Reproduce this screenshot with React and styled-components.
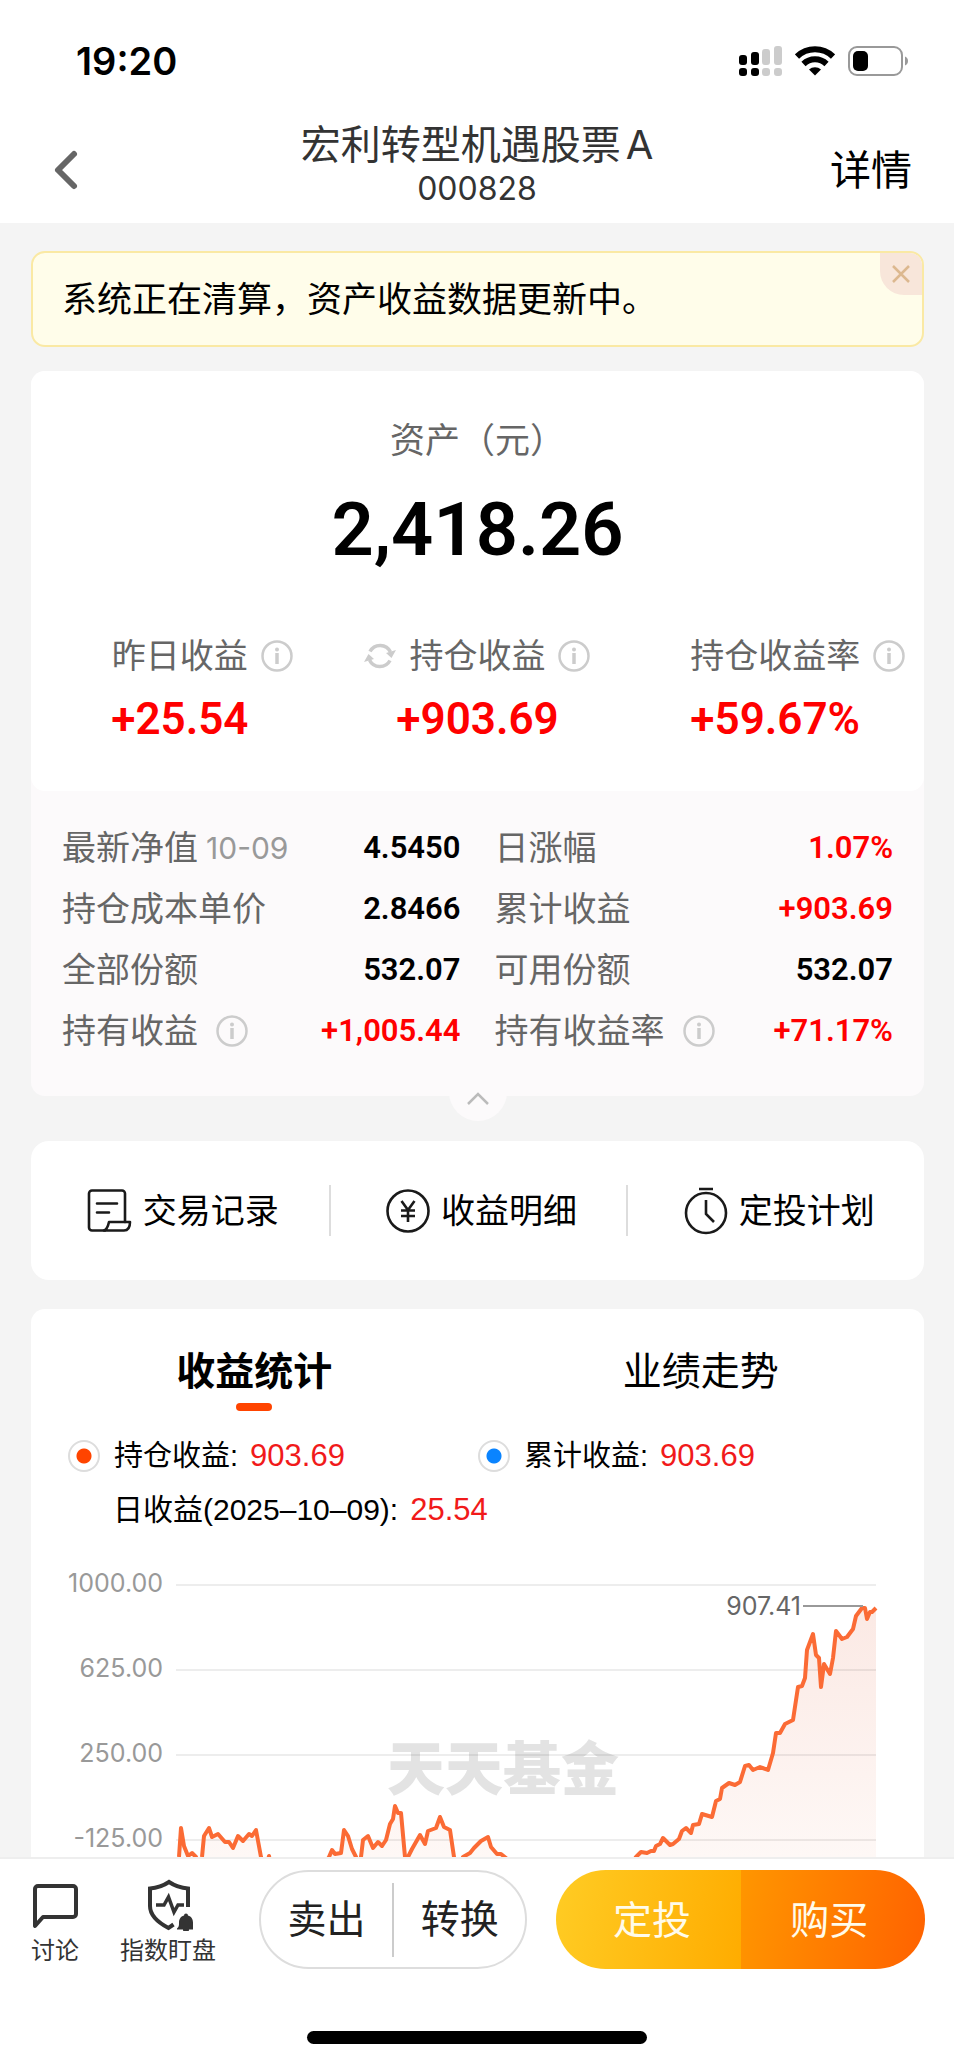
import { useState } from "react";
import styled, { createGlobalStyle } from "styled-components";

const GlobalStyle = createGlobalStyle`
  * {
    box-sizing: border-box;
  }

  body {
    margin: 0;
    background: #f4f4f4;
    color: #000;
    font-family: Inter, "Noto Sans CJK SC", sans-serif;
  }

  button {
    margin: 0;
    padding: 0;
    border: 0;
    background: none;
    color: inherit;
    font: inherit;
    cursor: pointer;
  }

  svg {
    display: block;
    flex: none;
  }
`;

const Page = styled.div`
  display: flex;
  flex-direction: column;
  height: 100vh;
`;

const Top = styled.header`
  flex: none;
  background: #fff;
`;

const StatusBar = styled.div`
  display: flex;
  align-items: center;
  justify-content: space-between;
  padding: 36px 44px 0 76px;
`;

const Clock = styled.span`
  font-size: 38px;
  line-height: 50px;
  font-weight: 600;
`;

const StatusIcons = styled.div`
  display: flex;
  align-items: center;
  gap: 13px;
`;

const NavBar = styled.nav`
  display: grid;
  grid-template-columns: 1fr auto 1fr;
  align-items: center;
  padding: 33px 42px 16px;
`;

const BackButton = styled.button`
  justify-self: start;
  padding: 14px 0 0 10px;
`;

const Heading = styled.div`
  display: flex;
  flex-direction: column;
  align-items: center;
  color: #333;
`;

const FundName = styled.h1`
  display: flex;
  gap: 5px;
  margin: 0;
  font-size: 40px;
  line-height: 52px;
  font-weight: 400;
`;

const FundCode = styled.span`
  font-size: 32px;
  line-height: 36px;
`;

const DetailLink = styled.a`
  justify-self: end;
  padding-top: 14px;
  color: #000;
  font-size: 41px;
  line-height: 56px;
  text-decoration: none;
`;

const Content = styled.main`
  flex: 1;
  min-height: 0;
  overflow-y: auto;
  scrollbar-width: none;
  padding: 28px 30px 0 31px;
`;

const Notice = styled.div`
  display: flex;
  align-items: flex-start;
  justify-content: space-between;
  overflow: hidden;
  border: 2px solid #fae9a4;
  border-radius: 14px;
  background: #fffdea;
`;

const NoticeText = styled.p`
  margin: 0;
  padding: 20px 29px;
  font-size: 35px;
  line-height: 52px;
`;

const NoticeClose = styled.button`
  display: grid;
  place-items: center;
  width: 42px;
  height: 42px;
  border-bottom-left-radius: 24px;
  background: #f8e6da;
`;

const Card = styled.section`
  border-radius: ${(p) => p.$radius || 14}px;
  background: #fff;
`;

const Holding = styled.section`
  display: flex;
  flex-direction: column;
  margin-top: 24px;
  border-radius: 14px;
  background: #fcfafb;
`;

const AssetCard = styled(Card)`
  padding: 43px 0 45px;
  text-align: center;
`;

const AssetLabel = styled.div`
  color: #666;
  font-size: 35px;
  line-height: 52px;
`;

const AssetValue = styled.div`
  margin-top: 16px;
  font-family: Roboto, sans-serif;
  font-size: 74px;
  line-height: 96px;
  font-weight: 600;
`;

const Summary = styled.div`
  display: grid;
  grid-template-columns: repeat(3, 1fr);
  margin-top: 52px;
`;

const SummaryLabel = styled.div`
  display: grid;
  grid-template-columns: 1fr auto 1fr;
  align-items: center;
  gap: 13px;
  color: #666;
  font-size: 34px;
  line-height: 52px;
`;

const Leading = styled.span`
  justify-self: end;
`;

const SummaryValue = styled.div`
  margin-top: 10px;
  color: #f00;
  font-family: Roboto, sans-serif;
  font-size: 44px;
  line-height: 54px;
  font-weight: 600;
`;

const InfoButton = styled.button`
  width: 32px;
  height: 32px;
`;

const Details = styled.dl`
  display: grid;
  grid-template-columns: 1fr 1fr;
  column-gap: 34px;
  row-gap: 9px;
  margin: 0;
  padding: 31px 31px 6px;
`;

const DetailItem = styled.div`
  display: flex;
  align-items: center;
  justify-content: space-between;
`;

const DetailLabel = styled.dt`
  display: flex;
  align-items: center;
  gap: ${(p) => (p.$info ? 18 : 8)}px;
  color: #666;
  font-size: 34px;
  line-height: 52px;
`;

const DetailDate = styled.span`
  color: #999;
  font-size: 30px;
`;

const DetailValue = styled.dd`
  margin: 0;
  color: ${(p) => (p.$up ? "#f00" : "#000")};
  font-family: Roboto, sans-serif;
  font-size: 31px;
  line-height: 52px;
  font-weight: 600;
`;

const Collapse = styled.button`
  display: grid;
  place-items: center;
  align-self: center;
  width: 58px;
  height: 58px;
  margin-bottom: -25px;
  padding-top: 14px;
  border-radius: 50%;
  background: #fcfafb;
`;

const Actions = styled(Card)`
  display: grid;
  grid-template-columns: repeat(3, 1fr);
  margin-top: 45px;
  padding: 44px 0;
`;

const ActionButton = styled.button`
  display: flex;
  align-items: center;
  justify-content: center;
  gap: 11px;
  height: 51px;
  padding-left: 6px;
  font-size: 34px;
  line-height: 50px;

  & + & {
    border-left: 2px solid #ddd;
  }
`;

const Stats = styled(Card)`
  margin-top: 29px;
  padding-top: 34px;
`;

const Tabs = styled.div`
  display: grid;
  grid-template-columns: 1fr 1fr;
`;

const Tab = styled.button`
  display: flex;
  flex-direction: column;
  align-items: center;
  gap: 4px;
  font-size: 39px;
  line-height: 56px;
  font-weight: ${(p) => (p.$active ? 700 : 400)};

  &::after {
    content: "";
    width: 36px;
    height: 8px;
    border-radius: 4px;
    background: ${(p) => (p.$active ? "#ff4400" : "transparent")};
  }
`;

const Legend = styled.div`
  display: grid;
  grid-template-columns: 410px 1fr;
  row-gap: 14px;
  margin-top: 25px;
  padding-left: 37px;
  font-family: "Liberation Sans", "Noto Sans CJK SC", sans-serif;
  font-size: 30px;
  line-height: 40px;
`;

const LegendItem = styled.label`
  display: flex;
  align-items: center;
  gap: 14px;
  font-size: 29px;
`;

const LegendToggle = styled.input`
  appearance: none;
  flex: none;
  width: 32px;
  height: 32px;
  margin: 0;
  border: 2px solid #ddd;
  border-radius: 50%;

  &:checked {
    background: radial-gradient(circle, ${(p) => p.$color} 7px, transparent 8px);
  }
`;

const DailyProfit = styled.div`
  grid-column: 1 / -1;
  padding-left: 45px;
`;

const Red = styled.span`
  margin-left: 12px;
  color: #f11a1a;
  font-size: 31px;
`;

const Chart = styled.svg`
  width: 100%;
  height: auto;
  margin-top: 31px;
  font-size: 25px;
`;

const Footer = styled.footer`
  flex: none;
  border-top: 2px solid #eee;
  background: #fff;
`;

const Toolbar = styled.div`
  display: flex;
  align-items: center;
  padding: 11px 29px 0 31px;
`;

const ToolButton = styled.button`
  display: flex;
  flex-direction: column;
  align-items: center;
  gap: 3px;
  margin-right: 41px;
  padding-top: 7px;
  color: #333;
  font-size: 24px;
  line-height: 34px;
`;

const OutlinePill = styled.div`
  display: flex;
  flex: 265;
  align-items: center;
  height: 99px;
  margin-left: 2px;
  border: 2px solid #ddd;
  border-radius: 50px;
  color: #222;
`;

const PillButton = styled.button`
  flex: 1;
  height: 74px;
  padding-bottom: 7px;
  font-size: 39px;

  & + & {
    border-left: 2px solid #ccc;
  }
`;

const SolidPill = styled.div`
  display: flex;
  flex: 370;
  height: 99px;
  margin-left: 29px;
  overflow: hidden;
  border-radius: 50px;
  color: #fffbea;
`;

const SolidButton = styled.button`
  flex: 1;
  padding-bottom: 6px;
  background: linear-gradient(100deg, ${(p) => p.$from}, ${(p) => p.$to});
  font-size: 39px;

  &:first-child {
    padding-left: 7px;
  }

  &:last-child {
    padding-right: 7px;
  }
`;

const HomeIndicator = styled.div`
  width: 340px;
  height: 13px;
  margin: 62px auto 20px;
  border-radius: 7px;
  background: #000;
`;

const SignalIcon = () => (
  <svg width="43" height="31" viewBox="0 0 43 31">
    <rect x="0" y="9" width="8" height="10" rx="3" />
    <rect x="12" y="6" width="8" height="13" rx="3" />
    <rect x="23" y="3" width="8" height="16" rx="3" fill="#ccc" />
    <rect x="35" y="0" width="8" height="19" rx="3" fill="#ccc" />
    <rect x="0" y="22" width="8" height="8" rx="3" />
    <rect x="12" y="22" width="8" height="8" rx="3" />
    <rect x="23" y="22" width="8" height="8" rx="3" fill="#ccc" />
    <rect x="35" y="22" width="8" height="8" rx="3" fill="#ccc" />
  </svg>
);

const WifiIcon = () => (
  <svg width="40" height="30" viewBox="0 0 40 30" fill="none" stroke="#000">
    <path d="M2 10.500a26 26 0 0 1 36 0" strokeWidth="6" />
    <path d="M8.500 18a16.500 16.500 0 0 1 23 0" strokeWidth="6" />
    <path d="M14 23.500a9 9 0 0 1 12 0L20 29.500z" fill="#000" stroke="none" />
  </svg>
);

const BatteryIcon = () => (
  <svg width="62" height="30" viewBox="0 0 62 30">
    <rect x="1" y="1" width="53" height="28" rx="8" fill="none" stroke="#999" strokeWidth="2" />
    <rect x="5" y="5" width="15" height="20" rx="5" />
    <path d="M57 10.500c4 1 4 8 0 9z" fill="#999" />
  </svg>
);

const BackIcon = () => (
  <svg width="28" height="44" viewBox="0 0 28 44" fill="none" stroke="#666" strokeWidth="6" strokeLinecap="round" strokeLinejoin="round">
    <path d="M22 6L6 22l16 16" />
  </svg>
);

const CloseIcon = () => (
  <svg width="18" height="18" viewBox="0 0 18 18" stroke="#dcb88f" strokeWidth="2.500">
    <path d="M1 1l16 16M17 1L1 17" />
  </svg>
);

const InfoIcon = () => (
  <svg width="32" height="32" viewBox="0 0 32 32">
    <circle cx="16" cy="16" r="14.500" fill="none" stroke="#ccc" strokeWidth="2.500" />
    <circle cx="16" cy="9.500" r="2" fill="#ccc" />
    <path d="M16 13v11" stroke="#ccc" strokeWidth="3.500" />
  </svg>
);

// two arcs with arrow heads on the right and the left
const RefreshIcon = () => (
  <svg width="32" height="28" viewBox="0 0 32 28" fill="none" stroke="#ccc" strokeWidth="3.500">
    <path d="M6 9.500A11.500 11.500 0 0 1 26.500 10" />
    <path d="M26 18.500A11.500 11.500 0 0 1 5.500 18" />
    <path d="M22 11l10-3-4.500 8zM10 17L0 20l4.500-8z" fill="#ccc" stroke="none" />
  </svg>
);

const ChevronUpIcon = () => (
  <svg width="24" height="14" viewBox="0 0 24 14" fill="none" stroke="#bbb" strokeWidth="2.500">
    <path d="M2 12L12 2l10 10" />
  </svg>
);

const RecordIcon = () => (
  <svg width="45" height="44" viewBox="0 0 45 44" fill="none" stroke="#1a1a1a" strokeWidth="2.600" strokeLinejoin="round" strokeLinecap="round">
    <path d="M38 33V4.500a3 3 0 0 0-3-3H5a3 3 0 0 0-3 3v34a3 3 0 0 0 3 3h13" />
    <path d="M22 33h21c0 5-2 8.500-6 8.500H17c3-1 4-4 5-8.500z" />
    <path d="M10 14.500h20M10 23.500h12" />
  </svg>
);

const YenIcon = () => (
  <svg width="44" height="44" viewBox="0 0 44 44" fill="none" stroke="#1a1a1a" strokeWidth="2.600">
    <circle cx="22" cy="22" r="20.500" />
    <path d="M15.500 12L22 21l6.500-9M22 21v12M15 21.500h14M15 27h14" />
  </svg>
);

const TimerIcon = () => (
  <svg width="44" height="48" viewBox="0 0 44 48" fill="none" stroke="#1a1a1a" strokeWidth="2.600">
    <circle cx="22" cy="26" r="20" />
    <path d="M15 2h14M22 13v14l8 8" />
  </svg>
);

const ChatIcon = () => (
  <svg width="46" height="52" viewBox="0 0 46 52" fill="none" stroke="#333" strokeWidth="4" strokeLinejoin="round">
    <path d="M3 47V10a3 3 0 0 1 3-3h35a3 3 0 0 1 3 3v25a3 3 0 0 1-3 3H11z" />
  </svg>
);

const ShieldIcon = () => (
  <svg width="50" height="52" viewBox="-4 0 50 52" fill="none" stroke="#333" strokeWidth="4">
    <path d="M41 28V9.500C34 9 28 7 22 3 16 7 10 9 3 9.500V27c0 10 9 17 18.500 22l5-3.500" />
    <path d="M9 26h8l4.500-8L27 33l4-7h6" strokeWidth="3.500" />
    <path
      d="M39 34.500a2 2 0 0 1 2 2c3.500 1 5 4 5 7 0 3 0 4.500 1 6v1H42a3 3 0 0 1-6 0h-6v-1c2-1.500 2-3 2-6 0-3 1.500-6 5-7a2 2 0 0 1 2-2z"
      fill="#333"
      stroke="none"
    />
  </svg>
);

const summary = [
  { label: "昨日收益", value: "+25.54" },
  { label: "持仓收益", value: "+903.69", refresh: true },
  { label: "持仓收益率", value: "+59.67%" },
];

const details = [
  { label: "最新净值", date: "10-09", value: "4.5450" },
  { label: "日涨幅", value: "1.07%", up: true },
  { label: "持仓成本单价", value: "2.8466" },
  { label: "累计收益", value: "+903.69", up: true },
  { label: "全部份额", value: "532.07" },
  { label: "可用份额", value: "532.07" },
  { label: "持有收益", value: "+1,005.44", up: true, info: true },
  { label: "持有收益率", value: "+71.17%", up: true, info: true },
];

const axis = [
  { label: "1000.00", y: 24 },
  { label: "625.00", y: 109 },
  { label: "250.00", y: 194 },
  { label: "-125.00", y: 279 },
];

const profitLine =
  "148,296 150,267 153,285 157,295 161,292 165,296 168,312 171,296 173,275 178,267 181,276 187,273 " +
  "194,281 198,281 202,287 207,275 212,280 218,273 221,275 225,269 230,296 234,310 238,295 241,310 " +
  "260,340 280,325 298,296 301,289 304,293 310,292 313,269 317,275 321,288 325,296 328,304 330,296 " +
  "332,279 337,275 342,287 347,281 351,285 355,279 359,263 362,258 364,245 367,252 370,252 374,296 " +
  "377,296 381,288 389,274 394,283 397,270 405,267 409,256 413,266 419,269 423,296 428,308 432,296 " +
  "439,292 443,287 450,280 457,276 460,286 466,293 470,293 475,297 500,330 550,345 590,318 605,296 " +
  "610,291 616,292 620,290 623,290 625,285 629,283 632,277 639,284 642,283 648,278 651,270 655,267 " +
  "660,272 662,264 668,263 671,253 681,256 685,240 689,238 691,227 698,222 704,224 709,221 714,205 " +
  "718,204 722,209 729,206 737,209 742,192 745,172 749,172 754,163 762,159 767,126 771,125 774,117 " +
  "776,89 782,73 785,94 788,97 790,126 793,103 799,113 802,97 805,70 811,78 816,76 822,68 825,55 " +
  "831,47 834,47 836,58 839,51 841,51 845,47";

const ProfitChart = () => (
  <Chart viewBox="0 0 893 380">
    <defs>
      <linearGradient id="profitFill" x1="0" y1="0" x2="0" y2="1">
        <stop offset="0" stopColor="#fbe9e4" />
        <stop offset="1" stopColor="#fffdfc" />
      </linearGradient>
    </defs>
    <polygon points={`148,380 ${profitLine} 845,380`} fill="url(#profitFill)" />
    <text x="356" y="229" fontSize="58" fontWeight="900" fill="#e3e3e3">
      天天基金
    </text>
    {axis.map(({ label, y }) => (
      <g key={label}>
        <path d={`M145 ${y}H845`} stroke="#000" strokeOpacity="0.070" strokeWidth="2" />
        <text x="132" y={y + 7} textAnchor="end" fill="#999">
          {label}
        </text>
      </g>
    ))}
    <polyline points={profitLine} fill="none" stroke="#fb6b35" strokeWidth="4" strokeLinejoin="round" />
    <path d="M772 45H832" stroke="#999" strokeWidth="2" />
    <text x="770" y="54" textAnchor="end" fill="#666">
      907.41
    </text>
  </Chart>
);

const Info = () => (
  <InfoButton aria-label="说明">
    <InfoIcon />
  </InfoButton>
);

export default function App() {
  const [tab, setTab] = useState("收益统计");

  return (
    <Page>
      <GlobalStyle />
      <Top>
        <StatusBar>
          <Clock>19:20</Clock>
          <StatusIcons>
            <SignalIcon />
            <WifiIcon />
            <BatteryIcon />
          </StatusIcons>
        </StatusBar>
        <NavBar>
          <BackButton aria-label="返回">
            <BackIcon />
          </BackButton>
          <Heading>
            <FundName>
              <span>宏利转型机遇股票</span>
              <span>A</span>
            </FundName>
            <FundCode>000828</FundCode>
          </Heading>
          <DetailLink href="#detail">详情</DetailLink>
        </NavBar>
      </Top>

      <Content>
        <Notice>
          <NoticeText>系统正在清算，资产收益数据更新中。</NoticeText>
          <NoticeClose aria-label="关闭">
            <CloseIcon />
          </NoticeClose>
        </Notice>

        <Holding>
          <AssetCard>
            <AssetLabel>资产（元）</AssetLabel>
            <AssetValue>2,418.26</AssetValue>
            <Summary>
              {summary.map(({ label, value, refresh }) => (
                <div key={label}>
                  <SummaryLabel>
                    <Leading>{refresh && <RefreshIcon />}</Leading>
                    {label}
                    <Info />
                  </SummaryLabel>
                  <SummaryValue>{value}</SummaryValue>
                </div>
              ))}
            </Summary>
          </AssetCard>
          <Details>
            {details.map(({ label, date, value, up, info }) => (
              <DetailItem key={label}>
                <DetailLabel $info={info}>
                  {label}
                  {date && <DetailDate>{date}</DetailDate>}
                  {info && <Info />}
                </DetailLabel>
                <DetailValue $up={up}>{value}</DetailValue>
              </DetailItem>
            ))}
          </Details>
          <Collapse aria-label="收起">
            <ChevronUpIcon />
          </Collapse>
        </Holding>

        <Actions $radius={18}>
          <ActionButton>
            <RecordIcon />
            交易记录
          </ActionButton>
          <ActionButton>
            <YenIcon />
            收益明细
          </ActionButton>
          <ActionButton>
            <TimerIcon />
            定投计划
          </ActionButton>
        </Actions>

        <Stats>
          <Tabs role="tablist">
            {["收益统计", "业绩走势"].map((name) => (
              <Tab key={name} role="tab" aria-selected={tab === name} $active={tab === name} onClick={() => setTab(name)}>
                {name}
              </Tab>
            ))}
          </Tabs>
          <Legend>
            <LegendItem>
              <LegendToggle type="checkbox" defaultChecked $color="#ff4400" />
              <span>
                持仓收益:<Red>903.69</Red>
              </span>
            </LegendItem>
            <LegendItem>
              <LegendToggle type="checkbox" defaultChecked $color="#0a84ff" />
              <span>
                累计收益:<Red>903.69</Red>
              </span>
            </LegendItem>
            <DailyProfit>
              日收益(2025–10–09):<Red>25.54</Red>
            </DailyProfit>
          </Legend>
          <ProfitChart />
        </Stats>
      </Content>

      <Footer>
        <Toolbar>
          <ToolButton>
            <ChatIcon />
            讨论
          </ToolButton>
          <ToolButton>
            <ShieldIcon />
            指数盯盘
          </ToolButton>
          <OutlinePill>
            <PillButton>卖出</PillButton>
            <PillButton>转换</PillButton>
          </OutlinePill>
          <SolidPill>
            <SolidButton $from="#ffcc24" $to="#ffac00">
              定投
            </SolidButton>
            <SolidButton $from="#ff9600" $to="#ff6200">
              购买
            </SolidButton>
          </SolidPill>
        </Toolbar>
        <HomeIndicator />
      </Footer>
    </Page>
  );
}
